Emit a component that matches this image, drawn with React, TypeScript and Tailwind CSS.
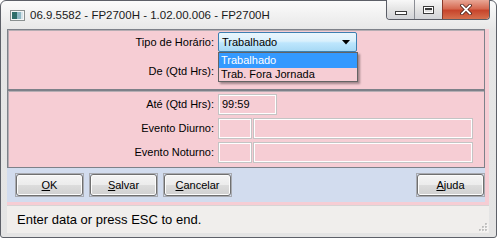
import React from 'react';

const font = "font-['Liberation_Sans',Arial,sans-serif]";

function WinButton({ label, accel }: { label: string; accel: number }) {
  return (
    <div className="h-[24px] w-[69px] border border-[#a8aab0] p-0">
      <div className="flex h-full w-full items-center justify-center rounded-[3px] border border-[#707070] bg-[linear-gradient(#f4f4f4_0%,#ececec_48%,#dcdcdc_52%,#d0d0d0_100%)] text-[11px] text-black shadow-[inset_0_0_0_1px_#fcfcfc]">
        <span>
          {label.slice(0, accel)}
          <span className="underline underline-offset-1">{label[accel]}</span>
          {label.slice(accel + 1)}
        </span>
      </div>
    </div>
  );
}

function Field({ w, children }: { w: string; children?: React.ReactNode }) {
  return (
    <div className={`${w} h-[21px] border border-[#c4c4c4] bg-[#f6cdd4] shadow-[inset_0_0_0_1px_#ffffff] flex items-center pl-[3px] text-[11px] text-black`}>
      {children}
    </div>
  );
}

function Label({ children }: { children: React.ReactNode }) {
  return <div className="w-[206px] text-right text-[11px] text-black pr-[0px]">{children}</div>;
}

export default function App() {
  return (
    <div className={`${font} w-[497px] h-[238px] flex flex-col rounded-t-[6px] rounded-b-[3px] border border-[#5d6068] bg-[linear-gradient(#fbfbfb,#e6e6e6_30px,#e4e4e4)] px-[6px] pr-[7px] pb-[4px]`}>
      {/* Title bar */}
      <div className="h-[28px] flex items-start shrink-0 -mx-[6px] -mr-[7px]">
        <svg width="15" height="11" viewBox="0 0 15 11" className="ml-[9px] mt-[9px]">
          <rect x="0.5" y="0.5" width="14" height="10" fill="#f4f6f6" stroke="#8a9090" />
          <rect x="2" y="2" width="5" height="7" fill="#2f6e6a" />
          <rect x="7" y="2" width="4" height="7" fill="#8fb8c4" />
          <rect x="11" y="2" width="2" height="7" fill="#d6e4ea" />
        </svg>
        <div className="ml-[5px] mt-[7px] text-[11.5px] leading-[14px] text-[#1a1a1a]">
          06.9.5582 - FP2700H - 1.02.00.006 - FP2700H
        </div>
        <div className="ml-auto mr-[6px] -mt-px flex h-[20px] overflow-hidden rounded-b-[4px] border border-t-0 border-[#5a5d66]">
          <div className="flex w-[28px] items-center justify-center border-r border-[#8a8d94] bg-[linear-gradient(#f8f8f8,#e4e4e4_50%,#d2d4d8)]">
            <div className="mt-[6px] h-[4px] w-[12px] border border-[#3c3c3c] bg-white" />
          </div>
          <div className="flex w-[28px] items-center justify-center border-r border-[#8a3a2a] bg-[linear-gradient(#f8f8f8,#e4e4e4_50%,#d2d4d8)]">
            <div className="h-[8px] w-[11px] border border-[#3c3c3c] bg-white p-[1px]">
              <div className="h-full w-full border-t-2 border-[#3c3c3c] bg-[#e0e0e0]" />
            </div>
          </div>
          <div className="flex w-[46px] items-center justify-center bg-[linear-gradient(#e9a796,#d66a52_45%,#c7452c_55%,#d6704e)]">
            <svg width="12" height="11" viewBox="0 0 12 11">
              <path d="M2 1.5 L10 9.5 M10 1.5 L2 9.5" stroke="#4a2018" strokeWidth="3.4" strokeLinecap="square" />
              <path d="M2 1.5 L10 9.5 M10 1.5 L2 9.5" stroke="#ffffff" strokeWidth="1.8" strokeLinecap="square" />
            </svg>
          </div>
        </div>
      </div>

      {/* Client area */}
      <div className="flex-1 flex flex-col bg-[#f6cdd4]">
        <div className="mr-[4px] flex flex-col">
          {/* Panel 1 */}
          <div className="relative h-[61px] border border-[#7d8189] shadow-[inset_1px_1px_0_#b6adb3] pt-[2px]">
            <div className="flex h-[20px] items-center">
              <Label>Tipo de Horário:</Label>
              <div className="ml-[4px] flex h-[20px] w-[139px] items-center justify-between rounded-[2px] border border-[#3c7fb1] bg-[linear-gradient(#eaf6fd,#d9f0fc_45%,#bee6fd_55%,#a7d9f5)] pl-[3px] pr-[6px] text-[11px] text-black">
                <span>Trabalhado</span>
                <svg width="8" height="5" viewBox="0 0 8 5">
                  <path d="M0 0 H8 L4 4.5 Z" fill="#000" />
                </svg>
              </div>
            </div>
            <div className="mt-[9px] flex h-[21px] items-center">
              <Label>De (Qtd Hrs):</Label>
            </div>
            {/* Open dropdown list */}
            <div className="absolute left-[210px] top-[22px] z-10 w-[140px] border border-[#646464] bg-[#f6cdd4] text-[11px] shadow-[2px_2px_2px_rgba(0,0,0,0.35)]">
              <div className="h-[15px] bg-[#3399ff] pl-[2px] leading-[15px] text-white">Trabalhado</div>
              <div className="h-[13px] pl-[2px] leading-[13px] text-black">Trab. Fora Jornada</div>
            </div>
          </div>

          {/* Panel 2 */}
          <div className="h-[78px] border border-[#7d8189] shadow-[inset_1px_1px_0_#b6adb3] pt-[3px] flex flex-col gap-[3px]">
            <div className="flex items-center">
              <Label>Até (Qtd Hrs):</Label>
              <div className="ml-[4px]">
                <Field w="w-[59px]">99:59</Field>
              </div>
            </div>
            <div className="flex items-center">
              <Label>Evento Diurno:</Label>
              <div className="ml-[4px] flex gap-px">
                <Field w="w-[34px]" />
                <Field w="w-[220px]" />
              </div>
            </div>
            <div className="flex items-center">
              <Label>Evento Noturno:</Label>
              <div className="ml-[4px] flex gap-px">
                <Field w="w-[34px]" />
                <Field w="w-[220px]" />
              </div>
            </div>
          </div>

          {/* Button bar */}
          <div className="h-[34px] bg-[#d2dcee] flex items-start pt-[5px] pl-[8px] gap-[5px]">
            <WinButton label="OK" accel={0} />
            <WinButton label="Salvar" accel={0} />
            <WinButton label="Cancelar" accel={0} />
            <div className="ml-auto">
              <WinButton label="Ajuda" accel={0} />
            </div>
          </div>
        </div>

        {/* Status bar */}
        <div className="relative mt-[3px] flex-1 border-t border-[#d8d4d4] bg-[#f0eeec] pl-[10px] flex items-center text-[13px] text-black">
          Enter data or press ESC to end.
          <svg width="10" height="10" viewBox="0 0 10 10" className="absolute bottom-[1px] right-[1px]">
            {[[8, 8], [5, 8], [2, 8], [8, 5], [5, 5], [8, 2]].map(([x, y], i) => (
              <g key={i}>
                <rect x={x} y={y} width="1.5" height="1.5" fill="#ffffff" />
                <rect x={x - 0.8} y={y - 0.8} width="1.5" height="1.5" fill="#a0a0a0" />
              </g>
            ))}
          </svg>
        </div>
      </div>
    </div>
  );
}
